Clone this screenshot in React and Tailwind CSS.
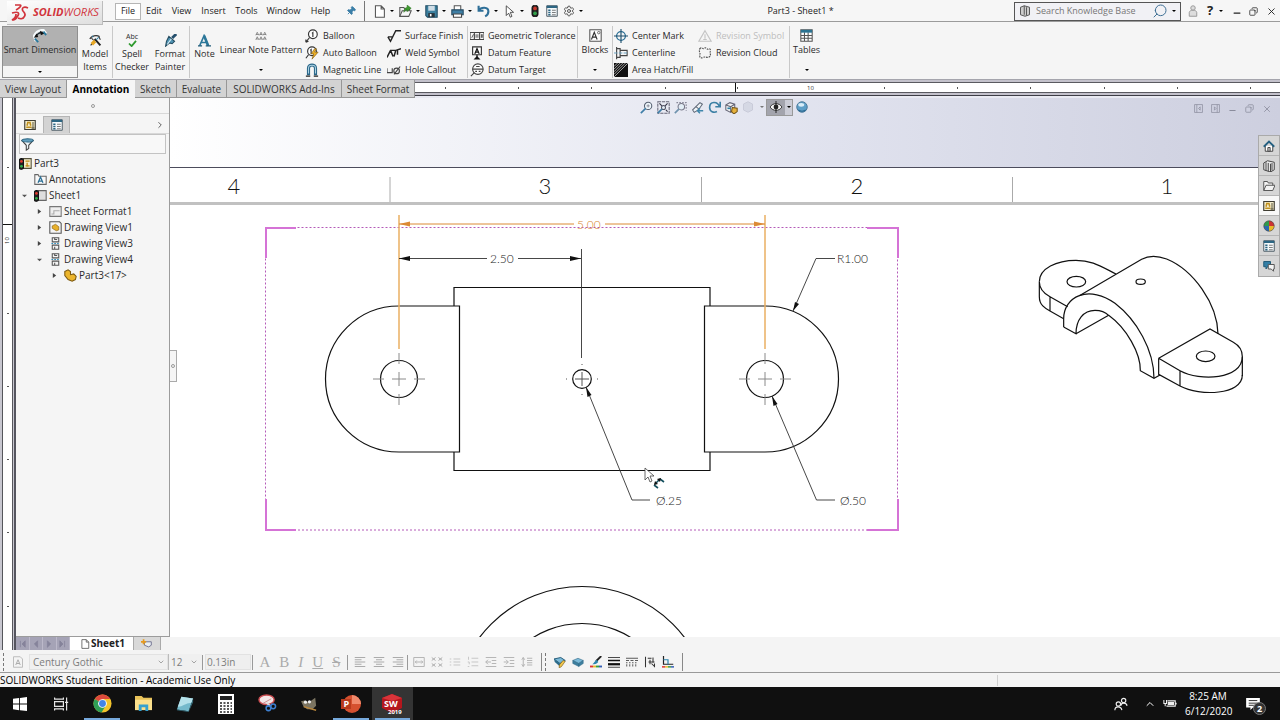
import React, { useState } from 'react';
import { ChevronRight, Minus, X, Copy, Pin, Search, Settings, ChevronDown, ChevronUp } from 'lucide-react';

// Small 16x16 drawing used for nearly every icon of the window
function Glyph({ children, className = 'size-3' }) {
  return (
    <svg viewBox="0 0 16 16" fill="none" stroke="#3c3c3c" strokeWidth="1.3" className={`shrink-0 ${className}`} aria-hidden="true">
      {children}
    </svg>
  );
}

function Caret({ className = 'text-black' }) {
  return (
    <svg viewBox="0 0 6 4" preserveAspectRatio="none" className={`h-[2px] w-1 shrink-0 ${className}`} aria-hidden="true">
      <path d="M0 0h6L3 4z" fill="currentColor" />
    </svg>
  );
}

const icons = {
  newDoc: <path d="M3 1h7l4 4v10H3zM10 1v4h4" fill="#fff" stroke="#555" />,
  open: (
    <>
      <path d="M1 14V3h5l1 2h6v3" fill="#eee" stroke="#555" />
      <path d="M1 14l3-7h11l-3 7z" fill="#f7f7f7" stroke="#555" />
      <path d="M6 9c0-4 2-6 4-6V0l5 4-5 4V6c-2 0-3 1-4 3z" fill="#3f9a2f" stroke="#216b16" strokeWidth=".6" />
    </>
  ),
  save: (
    <>
      <path d="M1 1h14v14H3l-2-2z" fill="#3b7f9e" stroke="#224c63" />
      <path d="M4 1h8v6H4z" fill="#cfdde6" stroke="none" />
      <path d="M4 10h8v5H4z" fill="#28343c" stroke="none" />
      <path d="M6 11h2v3H6z" fill="#fff" stroke="none" />
    </>
  ),
  print: (
    <>
      <path d="M4 6V1h8v5" fill="#fff" stroke="#555" />
      <path d="M1 6h14v6H1z" fill="#3f7fa5" stroke="#244a62" />
      <path d="M3 11h10v4H3z" fill="#fff" stroke="#444" />
    </>
  ),
  undo: <path d="M2 1v6h6M2 7c3-5 12-5 12 1 0 3-2 5-4 6" stroke="#2e6f98" strokeWidth="2.6" />,
  cursor: <path d="M4 1v12l3-3 2 5 2-1-2-5h4z" fill="#fff" stroke="#333" strokeWidth="1" />,
  light: (
    <>
      <rect x="4" y="0.500" width="8" height="15" rx="3" fill="#222" stroke="#111" />
      <circle cx="8" cy="4.500" r="2.500" fill="#c93a30" stroke="none" />
      <circle cx="8" cy="11" r="2.500" fill="#31a04a" stroke="none" />
    </>
  ),
  list: (
    <>
      <path d="M1 1h14v14H1z" fill="#f4f8fa" stroke="#4d5b66" />
      <path d="M1 1h14v3H1z" fill="#2c6683" stroke="none" />
      <path d="M3 7h3M3 10h3M3 13h3" stroke="#2c6683" strokeWidth="2" />
      <path d="M8 7h5M8 10h5M8 13h5" stroke="#555" strokeWidth="1" />
    </>
  ),
  smart: (
    <>
      <path d="M3 14L1 8C3 3 7 1 12 1l3 4" stroke="#f5fafc" strokeWidth="2.400" />
      <path d="M4 9C4 6 7 4 11 4" stroke="#16262f" strokeWidth="1.600" />
      <path d="M1 10l5-1-2-4zM13 5L8 2l1 5z" fill="#111" stroke="none" />
      <path d="M6 15l-4-4M15 7l-3-4" stroke="#26789d" strokeWidth="2" />
    </>
  ),
  model: (
    <>
      <path d="M1 6c2-4 8-5 12-3" stroke="#333" strokeWidth="1.500" />
      <path d="M3 5l3 3M12 3l2 4M2 14l5-6" stroke="#333" />
      <path d="M7 6l7 8" stroke="#222" strokeWidth="2.400" />
      <path d="M2 11l4-4 3 3-4 4z" fill="#e7a723" stroke="none" />
      <path d="M9 7l3-3M4 2l1 2" stroke="#2d7fa5" />
    </>
  ),
  painter: (
    <>
      <path d="M15 0l-5 5" stroke="#244f6c" strokeWidth="3.400" />
      <path d="M6 3l7 6-3 3-3-1-5 4 1-6 1-2z" fill="#4f94b4" stroke="#234a5e" />
      <path d="M4 13l5-7" stroke="#d8ecf5" />
    </>
  ),
  notePattern: (
    <path d="M1 7l2-4 2 4M6 7l2-4 2 4M11 7l2-4 2 4M1 13l2-4 2 4M6 13l2-4 2 4M11 13l2-4 2 4M1.500 6h3M6.500 6h3M11.500 6h3M1.500 12h3M6.500 12h3M11.500 12h3" stroke="#555" strokeWidth=".8" />
  ),
  balloon: (
    <>
      <circle cx="9" cy="6" r="5" fill="#fff" stroke="#333" />
      <path d="M8 5l1-1v5M5 10l-4 5M1 15l3-1M1 15v-3" stroke="#333" />
    </>
  ),
  autoBalloon: (
    <>
      <circle cx="8" cy="6" r="5" fill="#fff" stroke="#333" />
      <path d="M6 5l1-1v5M4 10l-3 4" stroke="#333" />
      <path d="M11 3l-4 6h3l-2 6 7-8h-4l2-4z" fill="#f0b429" stroke="#7a5510" strokeWidth=".7" />
    </>
  ),
  magnet: (
    <>
      <path d="M4 14V6c0-5 8-5 8 0v8" stroke="#2b6789" strokeWidth="3.600" />
      <path d="M4 12V6c0-4.500 8-4.500 8 0v6" stroke="#a9d0e2" strokeWidth="1.200" />
      <path d="M1 15h5M10 15h5" stroke="#222" />
    </>
  ),
  surface: <path d="M1 9l3 5L10 2h6M1 9h5" stroke="#222" strokeWidth="1.600" />,
  weld: <path d="M0 13L4 5h6l6-2M10 5l-2 7M4 5l3 7M12 4v6" stroke="#222" strokeWidth="1.700" />,
  hole: (
    <>
      <path d="M0 6v5h6V6" stroke="#444" />
      <circle cx="11" cy="9" r="3.200" stroke="#444" />
      <path d="M8 13l7-9" stroke="#444" />
    </>
  ),
  gtol: (
    <>
      <path d="M0 4h16v8H0zM5 4v8M11 4v8" fill="#f8f8f8" stroke="#444" />
      <path d="M2 10l2-4M7 10V6M9 10V6M13 10V6M14 10V6" stroke="#333" strokeWidth=".9" />
    </>
  ),
  datum: (
    <>
      <path d="M3 1h10v9H3z" fill="#fff" stroke="#333" />
      <path d="M5.500 9L8 3l2.500 6M6.500 7h3M8 10v3" stroke="#111" strokeWidth="1.400" />
      <path d="M4 15.500h8L8 11.500z" fill="#111" stroke="none" />
    </>
  ),
  target: (
    <>
      <circle cx="9" cy="7" r="6" fill="#fff" stroke="#444" />
      <path d="M3 7h12M5 11l-4 4M7 4h4M6 9.500h2M10 9.500h2" stroke="#444" />
    </>
  ),
  blocks: (
    <>
      <path d="M1 1h14v14H1z" fill="#fdfdfd" stroke="#555" />
      <path d="M3 13L6.500 4 10 13M4.500 10h4" stroke="#333" strokeWidth="1.400" />
      <circle cx="12" cy="4.500" r="1.500" stroke="#444" strokeWidth=".9" />
    </>
  ),
  centerMark: (
    <>
      <circle cx="8" cy="8" r="5" stroke="#2b6f95" strokeWidth="1.500" />
      <path d="M8 0v16M0 8h16" stroke="#1e4f6c" />
    </>
  ),
  centerline: (
    <>
      <path d="M3 1v14M3 3h4v10H3M7 5h8v6H7" stroke="#444" />
      <path d="M0 8h16" stroke="#6aa0bd" strokeDasharray="4 1.500" />
    </>
  ),
  hatch: (
    <>
      <path d="M0 0h16v16H0z" fill="#111" stroke="none" />
      <path d="M0 4l4-4M0 7l7-7M0 10L10 0M0 13L13 0M0 16L16 0" stroke="#ddd" strokeWidth=".8" />
    </>
  ),
  revSymbol: <path d="M8 2l7 12H1zM8 6v5M6 12h4" stroke="#c4c4c4" />,
  revCloud: <path d="M2 3c2-2 3 0 4 0s2-2 4 0 3-1 4 1-1 3 0 5-1 4-3 4-3-1-5 0-4 1-4-2 1-3 0-4 0-3 0-4z" stroke="#555" strokeDasharray="2 1" />,
  table: (
    <>
      <path d="M1 1h14v14H1zM1 8h14M1 11.500h14M5.500 4v11M10 4v11" fill="#fff" stroke="#555" />
      <path d="M1 1h14v3.500H1z" fill="#2c7391" stroke="none" />
    </>
  ),
  book: <path d="M2 3l5-2 7 2v10l-6 2-6-2zM7 1v12M10 3v11" fill="#ccc" stroke="#555" />,
  person: (
    <>
      <circle cx="8" cy="4" r="3" fill="#ddd" stroke="#999" />
      <path d="M3 15V10c0-4 10-4 10 0v5z" fill="#ddd" stroke="#999" />
    </>
  ),
  drawing: (
    <>
      <path d="M1 2h14v12H1z" fill="#f3eccb" stroke="#3f3d33" strokeWidth="1.500" />
      <path d="M4 4.500h5M5 5l-1 4M8 5l1 4M3 11h7" stroke="#c1901e" strokeWidth="2" />
      <path d="M12 4v9M10 12h4" stroke="#54503a" />
    </>
  ),
  partDrawing: (
    <>
      <path d="M5 2h10v12H5z" fill="#f3eccb" stroke="#54503a" />
      <path d="M8 5h5M8 11h5M10 7v5" stroke="#c18a16" strokeWidth="1.600" />
      <rect x="0.500" y="2" width="5" height="13" rx="2" fill="#222" stroke="#111" />
      <circle cx="3" cy="5.500" r="1.700" fill="#e03a2f" stroke="none" />
      <circle cx="3" cy="11.500" r="1.700" fill="#31b04a" stroke="none" />
    </>
  ),
  sheetLight: (
    <>
      <path d="M5 2h10v12H5z" fill="#dedede" stroke="#666" />
      <rect x="0.500" y="2" width="5" height="13" rx="2" fill="#222" stroke="#111" />
      <circle cx="3" cy="5.500" r="1.700" fill="#e03a2f" stroke="none" />
      <circle cx="3" cy="11.500" r="1.700" fill="#31b04a" stroke="none" />
    </>
  ),
  annotations: (
    <>
      <path d="M1 14V2h4l1 2h9v10z" fill="#f8f8f8" stroke="#666" />
      <path d="M5 12L8 5l3 7M6 10h4" stroke="#2b6f95" strokeWidth="1.600" />
    </>
  ),
  sheetFormat: (
    <>
      <path d="M1 2h14v12H1z" fill="#eee" stroke="#777" />
      <path d="M3 11h3V7h7" stroke="#aaa" />
    </>
  ),
  view1: (
    <>
      <path d="M1 1h12l2 2v12H1z" fill="#f5f5f5" stroke="#555" />
      <path d="M4 6l4-2 4 3v4l-3 1-5-3z" fill="#e8b02a" stroke="#8a6210" strokeWidth=".8" />
    </>
  ),
  viewProjected: (
    <>
      <path d="M4 1h8v5H4zM4 10h8v5H4zM7 1v2h3M7 12v3" fill="#f5f5f5" stroke="#555" />
      <path d="M3 8h10" stroke="#2b8ab8" strokeDasharray="2 1.500" />
    </>
  ),
  part: <path d="M1 3l4-2 3 2v4l4-1 3 3-1 4-4 2-5-2-4-5z" fill="#ecb52c" stroke="#7d5a10" />,
  filter: (
    <>
      <path d="M1 3l5.500 6v6l3-2V9L15 3z" fill="#eef5f8" stroke="#444" />
      <ellipse cx="8" cy="3" rx="7" ry="2" fill="#5f9fbe" stroke="#2c6683" />
    </>
  ),
  zoom: (
    <>
      <circle cx="10" cy="6" r="4.500" fill="#eef6fb" stroke="#555f70" />
      <path d="M7 9l-6 6" stroke="#3f7fa8" strokeWidth="2" />
      <path d="M8 6h4M10 4v4" stroke="#667" strokeWidth=".8" />
    </>
  ),
  zoomArea: (
    <>
      <path d="M1 1h14v14H1z" stroke="#667" strokeDasharray="4 1" />
      <path d="M3 3l3 3M13 3l-3 3M13 13l-2-2" stroke="#334" strokeWidth="1.400" />
      <circle cx="8" cy="8" r="2.500" fill="#e3eef6" stroke="#556" />
      <path d="M6 10l-5 5" stroke="#3f7fa8" strokeWidth="2" />
    </>
  ),
  zoomSel: (
    <>
      <path d="M3 2h12v10" stroke="#889" strokeDasharray="2 1.500" />
      <circle cx="9" cy="7" r="4" fill="#e3eef6" stroke="#778" />
      <path d="M6 10l-5 5" stroke="#6f93ae" strokeWidth="2" />
    </>
  ),
  section: (
    <>
      <path d="M2 11l9-9 3 2-5 7-5 3z" fill="#eef2f6" stroke="#5f6878" />
      <path d="M6 7l4 3" stroke="#5f6878" />
      <path d="M9 12h6M11 9l-3 3 3 3" stroke="#3f86ab" strokeWidth="1.800" />
    </>
  ),
  rotate: <path d="M14 7C12 0 2 0 2 8c0 5 5 7 9 5M15 1v6H9" stroke="#3b7fa4" strokeWidth="2" />,
  view3d: (
    <>
      <path d="M1 5l5-3 6 2v7l-5 3-6-3zM1 5l6 2v7M7 7l5-3" fill="#f2f2f2" stroke="#667" />
      <path d="M9 8l6 1v4l-4 3-3-3z" fill="#e6b13a" stroke="#75561a" />
      <path d="M3 9h4" stroke="#2d7fa5" strokeWidth="2" />
    </>
  ),
  cube: <path d="M2 4l6-3 6 3v8l-6 3-6-3z" fill="#d5d8e4" stroke="#c8cbd8" />,
  eye: (
    <>
      <path d="M0 8c4-6 12-6 16 0-4 6-12 6-16 0z" fill="#f4f4f4" stroke="#333" />
      <circle cx="8" cy="8" r="3.200" fill="#222" stroke="none" />
      <path d="M8 0v16" stroke="#222" />
    </>
  ),
  sphere: (
    <>
      <circle cx="8" cy="8" r="7" fill="#5f9fc8" stroke="#4a7898" />
      <ellipse cx="7" cy="5" rx="4" ry="2.500" fill="#d9edf8" stroke="none" />
      <path d="M3 12c3 2 7 2 10 0" stroke="#2d6b93" strokeWidth="1.500" />
    </>
  ),
  paneLeft: <path d="M1 1h14v14H1zM5 1v14M11 5L8 8l3 3z" stroke="#8a8c9c" />,
  paneRight: <path d="M1 1h14v14H1zM11 1v14M6 5l3 3-3 3z" stroke="#8a8c9c" />,
  home: (
    <>
      <path d="M3 8v7h10V8" fill="#fff" stroke="#444" />
      <path d="M1 9l7-7 7 7" stroke="#235f80" strokeWidth="2.400" />
      <path d="M6.500 10h3v5h-3z" fill="#d4d4d4" stroke="#444" />
    </>
  ),
  library: <path d="M1 4l5-3 9 2v10l-5 3-9-3zM4 3v11M7 4v11M10 5v11M12 4v10" fill="#e8e8e8" stroke="#444" />,
  folder: <path d="M1 14V2h5l1 2h6v3M1 14L4 7h12l-3 7z" fill="#f3f3f3" stroke="#555" />,
  appearance: (
    <>
      <path d="M8 8V1a7 7 0 0 0-7 7z" fill="#2f9a4b" stroke="none" />
      <path d="M8 8h7a7 7 0 0 0-7-7z" fill="#cc3333" stroke="none" />
      <path d="M8 8v7a7 7 0 0 0 7-7z" fill="#e9b92a" stroke="none" />
      <path d="M8 8H1a7 7 0 0 0 7 7z" fill="#2b69b0" stroke="none" />
      <circle cx="8" cy="8" r="7" stroke="#444" strokeWidth=".8" />
    </>
  ),
  forum: (
    <>
      <path d="M1 2h9v7H6l-2 3V9H1z" fill="#347fa6" stroke="#225a78" />
      <path d="M7 6h8v6h-1v3l-3-3H7z" fill="#f4f4f4" stroke="#555" />
    </>
  ),
  noteGray: (
    <>
      <path d="M2 1h9l3 3v11H2z" stroke="#bbb" />
      <path d="M5 12l3-7 3 7M6 10h4" stroke="#aaa" />
    </>
  ),
  alignLeft: <path d="M1 2h14M1 5h9M1 8h14M1 11h9M1 14h14" stroke="#a9a9a9" />,
  alignCenter: <path d="M1 2h14M4 5h8M1 8h14M4 11h8M1 14h14" stroke="#a9a9a9" />,
  alignRight: <path d="M1 2h14M6 5h9M1 8h14M6 11h9M1 14h14" stroke="#a9a9a9" />,
  fit: <path d="M1 2h14v12H1zM3 8h10M5 6L3 8l2 2M11 6l2 2-2 2" stroke="#b4b4b4" />,
  stack: <path d="M1 2l5 4M6 2L1 6M10 2l5 4M15 2l-5 4M1 10l5 4M6 10l-5 4M10 10l5 4M15 10l-5 4" stroke="#ababab" />,
  bullets: <path d="M1 4h2M1 8h2M1 12h2M6 4h9M6 8h9M6 12h9" stroke="#c6c6c6" />,
  numbers: <path d="M2 1v4M1 8h2v3M1 14h2M6 3h9M6 8h9M6 13h9" stroke="#c6c6c6" />,
  outdent: <path d="M1 2h14M9 6h6M9 10h6M1 14h14M1 8h7M4 5L1 8l3 3" stroke="#b4b4b4" />,
  indent: <path d="M1 2h14M9 6h6M9 10h6M1 14h14M1 8h6M4 5l3 3-3 3" stroke="#b4b4b4" />,
  spacing: <path d="M3 2v12M1 5l2-3 2 3M1 11l2 3 2-3M8 3h7M8 6h7M8 9h7M8 12h7" stroke="#b4b4b4" />,
  layerEdit: (
    <>
      <path d="M0 4l9-2 6 4-7 4z" fill="#7ab9d8" stroke="#245a78" />
      <path d="M0 4l8 6v4L1 8z" fill="#2c6c8c" stroke="none" />
      <path d="M15 7l-5 7-3 2v-4l5-6z" fill="#f1c64e" stroke="#6d5210" strokeWidth=".8" />
    </>
  ),
  layer: (
    <>
      <path d="M1 6l7-3 7 3-6 4z" fill="#7ab9d8" stroke="#2d6685" strokeWidth=".8" />
      <path d="M1 6l8 4v4L1 10zM9 10l6-4v4l-6 4z" fill="#3d7f9f" stroke="#2d6685" strokeWidth=".6" />
    </>
  ),
  lineColor: (
    <>
      <path d="M15 0L8 7" stroke="#222" strokeWidth="2.400" />
      <path d="M9 5l2 3c-2 3-5 3-8 3 2-1 3-4 6-6z" fill="#2d84ad" stroke="none" />
      <path d="M0 14h4" stroke="#d33" strokeWidth="2.500" />
      <path d="M4 14h4" stroke="#e8b92a" strokeWidth="2.500" />
      <path d="M8 14h4" stroke="#3a9d43" strokeWidth="2.500" />
      <path d="M12 14h4" stroke="#355fb5" strokeWidth="2.500" />
    </>
  ),
  thickness: (
    <>
      <path d="M0 2h16" stroke="#111" strokeWidth="1" />
      <path d="M0 6h16" stroke="#111" strokeWidth="2" />
      <path d="M0 11h16" stroke="#111" strokeWidth="3" />
      <path d="M0 15h16" stroke="#111" strokeWidth="1" />
    </>
  ),
  lineStyle: <path d="M0 3h16M0 6h4M6 6h4M12 6h4M0 9h2M4 9h2M8 9h2M12 9h2M1 11v3M5 11v3M9 11v3M13 11v3" stroke="#555" />,
  hideEdge: <path d="M2 1v14M5 3h5M12 2v7M6 8h8M8 5v6M10 10l4 4M14 10v5" stroke="#333" strokeWidth="1.400" />,
  colorMode: (
    <>
      <path d="M2 0v11h13" stroke="#222" strokeWidth="1.600" />
      <path d="M2 5h6v6" stroke="#2d84ad" strokeWidth="1.600" />
      <path d="M0 14.500h4" stroke="#d33" strokeWidth="2" />
      <path d="M4 14.500h4" stroke="#e8b92a" strokeWidth="2" />
      <path d="M8 14.500h4" stroke="#3a9d43" strokeWidth="2" />
      <path d="M12 14.500h4" stroke="#355fb5" strokeWidth="2" />
    </>
  ),
};

const quickAccess = ['newDoc', 'open', 'save', 'print', 'undo', 'cursor'];
const menus = [
  ['Edit', 'w-[26px]'],
  ['View', 'w-[29px]'],
  ['Insert', 'w-[35px]'],
  ['Tools', 'w-[31px]'],
  ['Window', 'w-[43px]'],
  ['Help', 'w-[31px]'],
];

function TitleBar() {
  return (
    <header className="flex h-[22px] shrink-0 items-center border-b border-[#9b9b9b] bg-[#f6f6f6] pt-[1px] text-[9px]">
      <div className="z-10 ml-[7px] flex h-6 w-24 shrink-0 items-center self-start border-r border-b border-[#bdbdbd] bg-gradient-to-br from-white to-[#dedede] pl-1">
        <svg viewBox="0 0 18 18" className="size-[18px]" fill="none" stroke="#d1343c" strokeWidth="1.700" aria-hidden="true">
          <path d="M4 1h5c2 0 0 3-4 5M1 9c7-2 8 0 5 4-1 2-3 3-5 3 2-1 4-3 4-6" />
          <path d="M17 4c-4-2-7 0-5 3 2 2 3 4 1 6-1 2-4 2-6 1" />
        </svg>
        <span className="ml-1 font-['Open_Sans',sans-serif] text-[11px] italic text-[#d1343c]">
          <b>SOLID</b>WORKS
        </span>
      </div>
      <nav className="ml-3 flex items-center">
        <button className="h-[17px] w-[26px] border border-[#b5b5b5] bg-white">File</button>
        {menus.map(([name, width]) => (
          <button key={name} className={`h-[17px] shrink-0 whitespace-nowrap text-center ${width}`}>{name}</button>
        ))}
      </nav>
      <Pin className="ml-[10px] size-[10px] rotate-45 fill-[#3c7fa8] text-[#3c7fa8]" />
      <div className="ml-2 h-full w-px bg-[#777]" />
      <div className="ml-2 flex items-center">
        {quickAccess.map(name => (
          <button key={name} aria-label={name} className="flex w-[26px] items-center gap-1">
            <Glyph className="size-[13px]">{icons[name]}</Glyph>
            <Caret />
          </button>
        ))}
        <button aria-label="Rebuild" className="w-[17px]"><Glyph className="size-3">{icons.light}</Glyph></button>
        <button aria-label="Options list" className="w-[17px]"><Glyph className="size-3">{icons.list}</Glyph></button>
        <button aria-label="Options" className="flex items-center gap-1"><Settings className="size-3 text-[#555]" /><Caret /></button>
      </div>
      <div className="flex-1 pl-1 text-center whitespace-nowrap">Part3 - Sheet1 *</div>
      <label className="flex h-[19px] w-[167px] shrink-0 items-center border border-[#555] bg-[#f1f1f5] px-1">
        <Glyph className="size-3">{icons.book}</Glyph>
        <input aria-label="Search Knowledge Base" placeholder="Search Knowledge Base" className="ml-[5px] min-w-0 flex-1 text-[9px] outline-none placeholder:text-[#777]" />
        <Search className="size-4 -scale-x-100 text-[#3f7095]" strokeWidth={1.5} />
        <span className="ml-1 flex"><Caret /></span>
      </label>
      <div className="flex items-center pl-[6px]">
        <button aria-label="Log in" className="w-5"><Glyph className="size-3">{icons.person}</Glyph></button>
        <button aria-label="Help" className="flex w-[25px] items-center gap-[6px] text-[13px] font-bold">?<Caret /></button>
        <button aria-label="Minimize" className="w-[17px]"><Minus className="mt-1 size-[10px]" strokeWidth={3} /></button>
        <button aria-label="Restore" className="w-[17px]"><Copy className="size-[9px] rotate-90" /></button>
        <button aria-label="Close" className="w-[14px]"><X className="size-[11px]" /></button>
      </div>
    </header>
  );
}

function Rule() {
  return <div className="h-full w-px shrink-0 bg-[#c9c9c9]" />;
}

function BigTool({ label, icon, className, drop = false }) {
  return (
    <button className={`flex h-full shrink-0 flex-col items-center leading-[13px] ${className}`}>
      {icon}
      <span>{label}</span>
      {drop && <span className="mt-auto mb-[7px] flex"><Caret /></span>}
    </button>
  );
}

function ToolColumn({ items, className }) {
  return (
    <div className={`flex shrink-0 flex-col pt-[1px] ${className}`}>
      {items.map(([label, icon, off]) => (
        <button key={label} disabled={off} className="flex h-[17px] shrink-0 items-center gap-1 whitespace-nowrap disabled:text-[#bdbdbd]">
          <Glyph className="size-[14px]">{icons[icon]}</Glyph>
          {label}
        </button>
      ))}
    </div>
  );
}

function Ribbon() {
  return (
    <div className="h-[58px] shrink-0 border-b border-[#a5a5ad] bg-[#f5f5f5] px-[2px] pt-1 text-[9px] text-[#2b2b2b]">
      <div className="flex h-[52px]">
        <button className="flex w-[76px] shrink-0 flex-col border border-[#8f8f8f]">
          <span className="flex h-[39px] w-full flex-col items-center bg-[#b1b1b1] pt-[2px] leading-[13px]">
            <Glyph className="size-[14px]">{icons.smart}</Glyph>
            <span className="whitespace-nowrap">Smart Dimension</span>
          </span>
          <span className="flex w-full flex-1 items-center justify-center"><Caret /></span>
        </button>
        <BigTool className="w-[34px] pt-2" icon={<Glyph className="size-[13px]">{icons.model}</Glyph>} label={<>Model<br />Items</>} />
        <Rule />
        <BigTool
          className="w-[38px] pt-2"
          icon={
            <span className="block h-[13px] w-4 text-[7px] leading-[6px]">
              Abc
              <svg viewBox="0 0 10 8" className="mx-auto h-[7px] w-[9px]" aria-hidden="true"><path d="M1 4l3 3 5-6" fill="none" stroke="#2e9a2e" strokeWidth="2" /></svg>
            </span>
          }
          label={<>Spell<br />Checker</>}
        />
        <BigTool className="w-[38px] pt-2" icon={<Glyph className="size-[13px]">{icons.painter}</Glyph>} label={<>Format<br />Painter</>} />
        <Rule />
        <BigTool
          className="w-[29px] pt-2"
          icon={
            <Glyph className="size-[13px]">
              <path d="M2 14.500L7.500 2l5 12.500M4 10.500h6.500" stroke="#2c7799" strokeWidth="2" />
              <path d="M7.500 2l5 12.500" stroke="#2c7799" strokeWidth="3.200" />
              <path d="M0 14.500h5M9.500 14.500H16" stroke="#1f5a78" strokeWidth="1.500" />
            </Glyph>
          }
          label="Note"
        />
        <BigTool className="w-[84px] whitespace-nowrap pt-1" drop icon={<Glyph className="mb-[1px] size-[12px]">{icons.notePattern}</Glyph>} label="Linear Note Pattern" />
        <ToolColumn className="ml-[2px] w-[82px]" items={[['Balloon', 'balloon'], ['Auto Balloon', 'autoBalloon'], ['Magnetic Line', 'magnet']]} />
        <ToolColumn className="w-[80px]" items={[['Surface Finish', 'surface'], ['Weld Symbol', 'weld'], ['Hole Callout', 'hole']]} />
        <Rule />
        <ToolColumn className="w-[109px] pl-[2px]" items={[['Geometric Tolerance', 'gtol'], ['Datum Feature', 'datum'], ['Datum Target', 'target']]} />
        <Rule />
        <BigTool className="w-[34px] pt-[3px]" drop icon={<Glyph className="mb-[1px] size-[13px]">{icons.blocks}</Glyph>} label="Blocks" />
        <Rule />
        <ToolColumn className="w-[85px] pl-[1px]" items={[['Center Mark', 'centerMark'], ['Centerline', 'centerline'], ['Area Hatch/Fill', 'hatch']]} />
        <ToolColumn className="w-[91px]" items={[['Revision Symbol', 'revSymbol', true], ['Revision Cloud', 'revCloud']]} />
        <Rule />
        <BigTool className="w-[33px] pt-[3px]" drop icon={<Glyph className="mb-[1px] size-[13px]">{icons.table}</Glyph>} label="Tables" />
      </div>
    </div>
  );
}

const tabs = [
  ['View Layout', 'w-[67px]'],
  ['Annotation', 'w-[68px]'],
  ['Sketch', 'w-[42px]'],
  ['Evaluate', 'w-[50px]'],
  ['SOLIDWORKS Add-Ins', 'w-[115px]'],
  ['Sheet Format', 'w-[73px]'],
];

function TabRow() {
  const [active, setActive] = useState('Annotation');
  return (
    <div className="flex h-[18px] shrink-0 bg-[#e9eaf2] text-[10px] text-[#333]">
      {tabs.map(([name, width]) => (
        <button
          key={name}
          onClick={() => setActive(name)}
          className={`shrink-0 whitespace-nowrap pt-[1px] ${width} ${name === active ? 'bg-[#f6f6f6] font-bold text-black' : 'border-r border-b border-[#979797] bg-[#d3d3d3]'}`}
        >
          {name}
        </button>
      ))}
      <div className="h-4 flex-1 overflow-hidden border-b border-[#3e3e46] bg-[#c3c1cb] pt-[2px] pb-[2px]">
        <svg className="block h-[11px] w-full border-y border-[#5a5a60] bg-white" aria-hidden="true">
          {[30, 103, 176, 250, 322, 469, 542, 615, 689, 762, 835].map(x => (
            <path key={x} d={`M${x}.500 4v2`} stroke="#555" />
          ))}
          <path d="M320.500 0v11" stroke="#111" strokeWidth="1" />
          <text x="392" y="7" fontSize="6" fill="#333">10</text>
        </svg>
      </div>
    </div>
  );
}

function LeftRuler() {
  return (
    <svg className="w-4 shrink-0 bg-[#c8c7d0]" height="100%" aria-hidden="true">
      <rect x="3" y="0" width="9" height="100%" fill="#fff" />
      <path d="M2.500 0v700M12.500 0v700" stroke="#56565c" />
      <path d="M15 0v700" stroke="#55555f" strokeWidth="2" />
      {[69, 215, 288, 361, 434, 508].map(y => <path key={y} d={`M7 ${y}.500h2`} stroke="#555" />)}
      <path d="M3 126.500h9" stroke="#111" strokeWidth="1" />
      <text transform="translate(9 146) rotate(-90)" fontSize="6" fill="#111">10</text>
    </svg>
  );
}

const tree = [
  ['Part3', 'partDrawing', 'pl-[3px]', null],
  ['Annotations', 'annotations', 'pl-[3px]', ''],
  ['Sheet1', 'sheetLight', 'pl-[3px]', 'open'],
  ['Sheet Format1', 'sheetFormat', 'pl-[18px]', 'closed'],
  ['Drawing View1', 'view1', 'pl-[18px]', 'closed'],
  ['Drawing View3', 'viewProjected', 'pl-[18px]', 'closed'],
  ['Drawing View4', 'viewProjected', 'pl-[18px]', 'open'],
  ['Part3<17>', 'part', 'pl-[33px]', 'closed'],
];

function FeatureTree() {
  return (
    <aside className="flex w-[154px] shrink-0 flex-col border-r border-b border-[#9c9c9c] bg-[#f5f5f5]">
      <div className="flex h-4 items-center justify-center border-b border-[#d8d8d8]">
        <span className="size-1 rounded-full border border-[#999]" />
      </div>
      <div className="flex h-5 items-end border-b border-[#d8d8d8] pl-[1px]">
        <button aria-label="Feature tree" className="flex h-[17px] w-[26px] items-center justify-center"><Glyph>{icons.drawing}</Glyph></button>
        <button aria-label="Properties" className="flex h-[17px] w-[27px] items-center justify-center border border-b-0 border-[#b5b5b5] bg-[#d3d3d3]"><Glyph>{icons.list}</Glyph></button>
        <button aria-label="More" className="mr-1 ml-auto flex h-[17px] items-center"><ChevronRight className="size-[10px] text-[#444]" /></button>
      </div>
      <label className="mx-[3px] flex h-5 items-center border border-[#c3c3c3] bg-[#f8f8f8] px-[1px]">
        <Glyph className="size-[13px]">{icons.filter}</Glyph>
        <input aria-label="Filter" className="min-w-0 flex-1 text-[10px] outline-none" />
      </label>
      <ul className="pt-[1px] text-[10px] text-[#2b2b2b]">
        {tree.map(([name, icon, indent, arrow]) => (
          <li key={name} className={`flex h-4 items-center whitespace-nowrap ${indent}`}>
            {arrow !== null && (
              <span className="w-[15px] shrink-0 pl-[3px]">
                {arrow === 'open' && <svg viewBox="0 0 6 6" className="size-[5px]"><path d="M0 2h6L3 5z" fill="#555" /></svg>}
                {arrow === 'closed' && <svg viewBox="0 0 6 6" className="size-[5px]"><path d="M1 0l4 3-4 3z" fill="#444" /></svg>}
              </span>
            )}
            <Glyph className="size-[13px]">{icons[icon]}</Glyph>
            <span className="ml-[2px]">{name}</span>
          </li>
        ))}
      </ul>
    </aside>
  );
}

// Centre mark of a hole: a cross inside and four short ticks outside
function CenterMark({ x }) {
  return (
    <path
      d={`M${x - 7} 379h14M${x} 372v14M${x - 26} 379h11M${x + 15} 379h11M${x} 353v11M${x} 394v11`}
      stroke="#8a8a8a"
    />
  );
}

function Sheet() {
  return (
    <svg viewBox="170 98 1110 539" preserveAspectRatio="xMinYMin slice" className="absolute inset-0 h-full w-full font-['Lato',sans-serif] font-light" fill="none">
      <rect x="170" y="168" width="1110" height="480" fill="#fff" />
      <path d="M170 167.500h1110" stroke="#4c4c5c" />
      <path d="M170 203.500h1110" stroke="#c1c1c1" strokeWidth="3" />
      <path d="M390 177v25M701.500 177v25M1012.500 177v25" stroke="#aaa" />
      <g fontSize="22" fill="#111" textAnchor="middle">
        <text x="234" y="194">4</text>
        <text x="545" y="194">3</text>
        <text x="857" y="194">2</text>
        <text x="1167" y="194">1</text>
      </g>

      {/* selected view frame */}
      <path d="M265.500 227.500H897.500V530H265.500z" stroke="#b45ab8" strokeDasharray="2 2" />
      <path d="M266 258V228h30M867 228h31v30M266 499v31h30M867 530h31v-31" stroke="#d573d6" strokeWidth="2" />

      {/* top view outline */}
      <g stroke="#111" strokeWidth="1.200">
        <path d="M454 306V287.500H710V306M454 452v18.500H710V452" />
        <path d="M459.500 306H399a73.500 73 0 0 0 0 146h60.500z" />
        <path d="M704.500 306H765a73.500 73 0 0 1 0 146h-60.500z" />
        <circle cx="399" cy="379" r="18.500" />
        <circle cx="765" cy="379" r="18.500" />
        <circle cx="582" cy="379" r="9.300" />
      </g>
      <CenterMark x={399} />
      <CenterMark x={765} />
      <path d="M575 379h14M582 372v14M566 379h1M597 379h1M582 364v1M582 394v1" stroke="#555" />

      {/* selected dimension */}
      <path d="M399 215v134M765 215v134" stroke="#eab063" strokeWidth="1.500" />
      <path d="M399 224H574M605 224H765" stroke="#dc8a35" />
      <path d="M399 224l11-2.500v5zM765 224l-11-2.500v5z" fill="#dc8a35" />
      <text x="577" y="229" fontSize="12" fill="#d9872f">5.00</text>

      {/* other dimensions */}
      <g stroke="#333" strokeWidth=".9">
        <path d="M399 258.500H487M518 258.500H581M581.500 249V358" />
        <path d="M793 311L816 258.500H835M586 387L632 500H650M772 396L816.500 500H835" />
      </g>
      <g fill="#111">
        <path d="M399 258.500l11-2.500v5zM581 258.500l-11-2.500v5z" />
        <path d="M793 311l2-9 4 2zM586 387l1.500 10 4-2zM772 396l1.500 10 4-2z" />
      </g>
      <g fontSize="12" fill="#222">
        <text x="490" y="263">2.50</text>
        <text x="837" y="263">R1.00</text>
        <text x="656" y="505">Ø.25</text>
        <text x="840" y="505">Ø.50</text>
      </g>

      {/* front view, partly below the window */}
      <g stroke="#111" strokeWidth="1.200">
        <circle cx="582" cy="715" r="128.500" />
        <circle cx="582" cy="715" r="91.500" />
      </g>

      {/* isometric view */}
      <g transform="translate(1020 90) scale(.33333)" stroke="#111" strokeWidth="3.600">
        <path d="M58 575C58 535 110 511 168 511 215 511 240 528 288 552" />
        <path d="M58 575v45M58 575c0 25 17 37 32 45l53 30M58 620c0 25 17 35 32 43l41 23M90 620v43" />
        <ellipse cx="169" cy="575" rx="28" ry="16" />
        <ellipse cx="362" cy="575" rx="14" ry="8" />
        <path d="M178 617L365 508C385 497 410 496 440 507 520 540 592 640 594 732" />
        <path d="M131 711v-25c0-31 17-58 47-69 32-12 72-2 107 23 65 50 117 140 117 225" />
        <path d="M131 711l37 20c0-41 22-70 57-70 20 0 35 9 41 15 54 39 96 114 95 166l41 23 18-10M168 731l98-55" />
        <path d="M416 805l154-88 70 40c18 10 27 23 27 43v58" />
        <path d="M416 805l64 37c60 33 187 26 187-42M416 805v48l64 35c60 32 187 27 187-33M480 842v46" />
        <ellipse cx="557" cy="799" rx="28" ry="16" />
      </g>

      {/* mouse pointer with the dimension tool */}
      <path d="M645 468v12l3-3 2 5 2-1-2-5h4z" fill="#fff" stroke="#444" strokeWidth=".8" />
      <path d="M658 488l-4-3M664 482l-4-3M655 484l5-5" stroke="#14505f" strokeWidth="1.600" />
      <path d="M654 485l1-4 3 3zM661 478l-4 1 3 3z" fill="#111" />
    </svg>
  );
}

const viewTools = ['zoom', 'zoomArea', 'zoomSel', 'section', 'rotate', 'view3d'];
const paneTools = ['home', 'library', 'folder', 'drawing', 'appearance', 'list', 'forum'];

function Canvas() {
  return (
    <section className="relative min-w-0 flex-1 overflow-hidden bg-gradient-to-r from-white via-[#e0e2ee] via-60% to-[#cdcfdf]">
      <Sheet />
      <div className="absolute inset-x-0 top-0 flex h-[18px] items-center justify-center pr-[2px]">
        {viewTools.map(name => (
          <button key={name} aria-label={name} className="flex w-[17px] justify-center"><Glyph className="size-[13px]">{icons[name]}</Glyph></button>
        ))}
        <button aria-label="Display style" className="flex w-[26px] items-center gap-[6px] pl-[2px]"><Glyph>{icons.cube}</Glyph><Caret className="text-[#777]" /></button>
        <button aria-label="Hide or show items" className="flex h-[17px] w-[27px] items-center border border-[#999] bg-[#cbccd6]">
          <span className="flex h-full w-[18px] items-center justify-center bg-[#a3a4ad]"><Glyph>{icons.eye}</Glyph></span>
          <span className="ml-[2px] flex"><Caret /></span>
        </button>
        <button aria-label="Scene" className="flex w-[18px] justify-center"><Glyph>{icons.sphere}</Glyph></button>
      </div>
      <div className="absolute top-1 right-2 flex items-center gap-2 text-[#8a8c9c]">
        <button aria-label="Dock left"><Glyph className="size-[9px]">{icons.paneLeft}</Glyph></button>
        <button aria-label="Dock right"><Glyph className="size-[9px]">{icons.paneRight}</Glyph></button>
        <button aria-label="Minimize drawing"><Minus className="mt-1 size-[9px]" strokeWidth={3} /></button>
        <button aria-label="Restore drawing"><Copy className="size-[9px] rotate-90" /></button>
        <button aria-label="Close drawing"><X className="size-[10px]" /></button>
      </div>
      <div className="absolute top-[37px] right-0 flex w-[22px] flex-col border border-[#aaa] bg-[#d6d6d6]">
        {paneTools.map(name => (
          <button key={name} aria-label={name} className={`flex h-5 items-center justify-center border-b border-[#b5b5b5] last:border-b-0 ${name === 'drawing' ? 'bg-[#f8f8f8]' : ''}`}>
            <Glyph>{icons[name]}</Glyph>
          </button>
        ))}
      </div>
      <button aria-label="Collapse panel" className="absolute top-[252px] -left-px flex h-8 w-2 items-center justify-center border border-[#aaa] bg-[#f5f5f5]">
        <span className="size-1 rounded-full border border-[#999]" />
      </button>
    </section>
  );
}

function SheetTabs() {
  const arrows = ['M3 1v8M9 1L5 5l4 4z', 'M7 1L3 5l4 4z', 'M3 1l4 4-4 4z', 'M7 1v8M1 1l4 4-4 4z'];
  return (
    <div className="flex h-[13px] shrink-0 bg-[#f4f4f4]">
      <div className="flex w-[54px]">
        {arrows.map(d => (
          <button key={d} aria-label="Scroll sheets" className="flex flex-1 items-center justify-center border-r border-[#bcb9ca] bg-[#a5a3b6]">
            <svg viewBox="0 0 10 10" className="size-2"><path d={d} fill="#85839a" stroke="#85839a" /></svg>
          </button>
        ))}
      </div>
      <button className="flex w-[63px] items-center justify-center gap-[1px] bg-white pl-[2px] text-[10px] leading-[13px] font-bold">
        <Glyph className="size-[10px]">{icons.newDoc}</Glyph>
        Sheet1
      </button>
      <button aria-label="Add sheet" className="flex w-7 items-center justify-center border-x border-[#aaa] bg-[#d9d9d9]">
        <svg viewBox="0 0 14 10" className="h-[9px] w-3">
          <path d="M4 3h8v4l-3 2-5-2z" fill="#e8eef2" stroke="#668" />
          <path d="M3 0v6M0 3h6" stroke="#e59a1f" strokeWidth="2" />
        </svg>
      </button>
    </div>
  );
}

function Bar() {
  return <div className="h-[15px] w-px shrink-0 bg-[#999]" />;
}

function FormatBar() {
  const tools = ['fit', 'stack', 'bullets', 'numbers', 'outdent', 'indent', 'spacing'];
  const lines = ['layerEdit', 'layer', 'lineColor', 'thickness', 'lineStyle', 'hideEdge', 'colorMode'];
  return (
    <div className="flex h-[22px] shrink-0 items-center bg-[#f4f4f4] pt-[2px] text-[10px] text-[#7d7d7d]">
      <div className="ml-[3px] h-[18px] border-l border-dashed border-[#777]" />
      <button aria-label="Note format" className="flex w-[25px] justify-center pl-[3px]"><Glyph>{icons.noteGray}</Glyph></button>
      <div className="relative">
        <select aria-label="Font" className="block h-4 w-[139px] appearance-none border border-[#e2e2e2] bg-[#f0f0f0] pl-[3px] leading-[14px]"><option>Century Gothic</option></select>
        <ChevronDown className="pointer-events-none absolute top-1 right-[3px] size-2" />
      </div>
      <div className="relative">
        <select aria-label="Font size" className="block h-4 w-[34px] appearance-none border-l border-[#bbb] bg-[#f0f0f0] pl-[2px] leading-[14px]"><option>12</option></select>
        <ChevronDown className="pointer-events-none absolute top-1 right-1 size-2" />
      </div>
      <Bar />
      <input aria-label="Text height" defaultValue="0.13in" className="ml-[2px] h-4 w-[46px] border border-[#e2e2e2] bg-[#efefef] pl-[1px]" />
      <div className="ml-[1px]"><Bar /></div>
      <div className="flex w-[94px] items-center justify-around px-[2px] font-['Liberation_Serif',serif] text-[15px] leading-[15px] text-[#ababab]">
        <button>A</button>
        <button>B</button>
        <button className="italic">I</button>
        <button className="underline">U</button>
        <button className="line-through">S</button>
      </div>
      <Bar />
      <div className="flex w-[59px] justify-around pl-[2px]">
        {['alignLeft', 'alignCenter', 'alignRight'].map(name => <button key={name} aria-label={name}><Glyph>{icons[name]}</Glyph></button>)}
      </div>
      <Bar />
      <div className="flex w-[133px] gap-[6px] pl-[5px]">
        {tools.map(name => <button key={name} aria-label={name}><Glyph>{icons[name]}</Glyph></button>)}
      </div>
      <div className="h-[18px] w-px bg-[#888]" />
      <div className="ml-[3px] h-[18px] border-l border-dashed border-[#777]" />
      <div className="flex w-[136px] gap-[6px] pl-2">
        {lines.map(name => <button key={name} aria-label={name}><Glyph>{icons[name]}</Glyph></button>)}
      </div>
      <div className="h-[18px] w-px bg-[#888]" />
    </div>
  );
}

const apps = [
  ['Task view', (
    <svg viewBox="0 0 20 20" className="size-4" fill="none" stroke="#e6e6e6" strokeWidth="1.500">
      <path d="M2 2v2h11V2M2 18v-2h11v2M2 7h11v6H2zM17 2v16M15 8h4" />
    </svg>
  )],
  ['Chrome', (
    <svg viewBox="0 0 20 20" className="size-[19px]">
      <circle cx="10" cy="10" r="9.500" fill="#f2c32c" />
      <path d="M10 10L1.800 5.200A9.500 9.500 0 0 1 18.200 5.200H10z" fill="#dd4a3c" />
      <path d="M10 10L1.800 5.200A9.500 9.500 0 0 0 9 19.500l4.500-7.500z" fill="#2f9e56" />
      <circle cx="10" cy="10" r="4.600" fill="#fff" />
      <circle cx="10" cy="10" r="3.600" fill="#4284e8" />
    </svg>
  ), true],
  ['File Explorer', (
    <svg viewBox="0 0 20 18" className="h-[17px] w-[19px]">
      <path d="M1 1h7l2 2h9v13H1z" fill="#e9c35a" />
      <path d="M1 5h18v11H1z" fill="#fbe08d" />
      <path d="M5 17v-7h10v7h-3v-4H8v4z" fill="#35a0cf" />
    </svg>
  )],
  ['Notepad', (
    <svg viewBox="0 0 20 20" className="size-[18px]">
      <path d="M6 2l13 2-5 14-13-2z" fill="#74b9cb" />
      <path d="M6 2l13 2-2 5C12 8 8 13 2 13z" fill="#b5e1ea" />
      <path d="M19 4v4l-5 11-13-2v-1l13 2z" fill="#356a78" />
    </svg>
  )],
  ['Calculator', (
    <svg viewBox="0 0 16 20" className="h-5 w-4">
      <path d="M0 0h16v20H0z" fill="#fff" />
      <path d="M2 2h12v4H2z" fill="#222" />
      <path d="M2 9h2M5.500 9h2M9 9h2M12.500 9h1.500M2 12h2M5.500 12h2M9 12h2M12.500 12h1.500M2 15h2M5.500 15h2M9 15h2M12.500 15h1.500M2 18h2M5.500 18h2M9 18h2M12.500 18h1.500" stroke="#222" strokeWidth="1.500" />
    </svg>
  )],
  ['Snipping Tool', (
    <svg viewBox="0 0 20 20" className="size-[19px]" fill="none">
      <ellipse cx="9" cy="6" rx="8" ry="5" fill="#f3e6e6" stroke="#c94b4f" strokeWidth="1.500" />
      <path d="M5 10l9-5" stroke="#c98a8c" />
      <path d="M9 9l4 4" stroke="#ddd" strokeWidth="2" />
      <circle cx="11" cy="15" r="2.500" stroke="#3d7fd0" strokeWidth="1.600" />
      <circle cx="16" cy="13" r="2.500" stroke="#3d7fd0" strokeWidth="1.600" />
    </svg>
  )],
  ['GIMP', (
    <svg viewBox="0 0 20 18" className="h-4 w-[18px]">
      <path d="M1 6l4-1 5 2 7-5 1 9-4 4H8l-4-3z" fill="#7b7461" />
      <circle cx="6" cy="7" r="1.800" fill="#eee" />
      <circle cx="10.500" cy="6.500" r="1.800" fill="#eee" />
      <path d="M4 12l14 4" stroke="#b8863c" strokeWidth="1.600" />
    </svg>
  )],
  ['PowerPoint', (
    <svg viewBox="0 0 20 18" className="h-[18px] w-5">
      <circle cx="11" cy="9" r="9" fill="#d5502f" />
      <path d="M11 0a9 9 0 0 1 9 9h-9z" fill="#f08a6c" />
      <path d="M0 4h10v10H0z" fill="#b83a1c" />
      <text x="2.500" y="12" fontSize="9" fontWeight="700" fill="#fff">P</text>
    </svg>
  ), true],
  ['SOLIDWORKS 2019', (
    <svg viewBox="0 0 20 20" className="size-5">
      <path d="M0 4l10-4 10 4v10l-10 5L0 14z" fill="#b4161d" />
      <path d="M0 4l10-4 10 4-10 3z" fill="#d9343a" />
      <text x="2" y="13" fontSize="9" fontWeight="700" fill="#fff">SW</text>
      <text x="6" y="19.500" fontSize="6" fontWeight="700" fill="#fff">2019</text>
    </svg>
  ), true, true],
];

function Taskbar() {
  return (
    <footer className="flex h-[33px] shrink-0 items-stretch bg-[#101010] text-[10px] text-white">
      <button aria-label="Start" className="flex w-10 items-center justify-center">
        <svg viewBox="0 0 16 16" className="size-[14px]" fill="#fff"><path d="M0 2l7-1v6.500H0zM8 1l8-1v7.500H8zM0 8.500h7V15l-7-1zM8 8.500h8V16l-8-1z" /></svg>
      </button>
      <div className="flex w-[373px]">
        {apps.map(([name, icon, running, current]) => (
          <button key={name} aria-label={name} className={`relative flex flex-1 items-center justify-center ${current ? 'bg-[#343434]' : ''}`}>
            {icon}
            {running && <span className="absolute inset-x-[3px] bottom-0 h-[2px] bg-[#76a9dc]" />}
          </button>
        ))}
      </div>
      <div className="mr-[2px] ml-auto flex items-center">
        <button aria-label="People" className="w-[30px]">
          <svg viewBox="0 0 16 16" className="size-[14px]" fill="none" stroke="#eee" strokeWidth="1.300">
            <circle cx="11" cy="4" r="2.500" /><path d="M8 10c0-4 6-4 7 0" /><circle cx="5" cy="8" r="2.500" /><path d="M1 15c0-5 7-5 8 0" />
          </svg>
        </button>
        <button aria-label="Hidden icons" className="w-[19px]"><ChevronUp className="size-3" /></button>
        <svg viewBox="0 0 16 10" className="h-[9px] w-[14px]" fill="none" stroke="#eee" strokeWidth="1.200">
          <path d="M5 2h9v6H4M15 4v2M1 1v4h3V1M2.500 5v3" /><path d="M6 4h6v2H6z" fill="#eee" />
        </svg>
        <div className="ml-2 w-[46px] text-center text-[10px] leading-[15px] whitespace-nowrap">8:25 AM<br />6/12/2020</div>
        <button aria-label="Notifications" className="relative ml-[15px] w-8">
          <svg viewBox="0 0 16 14" className="h-3 w-[14px]"><path d="M0 0h16v11H8l-3 3v-3H0z" fill="#fff" /><path d="M3 3h10M3 6h10M3 8.500h6" stroke="#111" /></svg>
          <span className="absolute top-1 left-[7px] flex size-[13px] items-center justify-center rounded-full border border-[#777] bg-[#333] text-[9px] leading-none font-bold">2</span>
        </button>
      </div>
    </footer>
  );
}

export default function App() {
  return (
    <div className="flex h-screen w-full flex-col overflow-hidden bg-[#f4f4f4] font-['Open_Sans',sans-serif] text-[#222]">
      <TitleBar />
      <Ribbon />
      <TabRow />
      <main className="flex min-h-0 flex-1">
        <LeftRuler />
        <div className="flex min-w-0 flex-1 flex-col">
          <div className="flex min-h-0 flex-1">
            <FeatureTree />
            <Canvas />
          </div>
          <SheetTabs />
        </div>
      </main>
      <FormatBar />
      <div className="flex h-[15px] shrink-0 items-center border-t border-[#999] bg-[#f4f4f4] pt-[1px] text-[10px] leading-[13px] whitespace-nowrap text-black">
        <span className="w-[997px] min-w-0 shrink">SOLIDWORKS Student Edition - Academic Use Only</span>
        <span className="h-[11px] w-px bg-[#d0d0d0]" />
      </div>
      <Taskbar />
    </div>
  );
}
